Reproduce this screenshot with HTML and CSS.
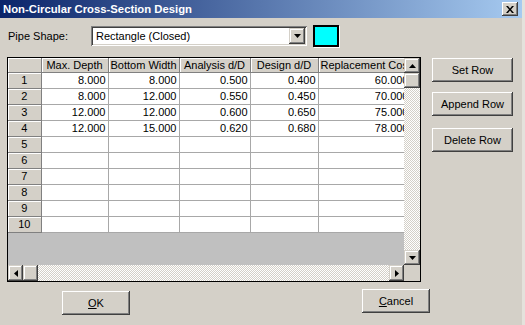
FILE: index.html
```html
<!DOCTYPE html>
<html lang="en">
<head>
    <meta charset="UTF-8">
    <title>Non-Circular Cross-Section Design</title>
    <link rel="stylesheet" href="styles.css">
</head>
<body>
    <div class="window">
        <div class="titleBar">
            <span class="titleText">Non-Circular Cross-Section Design</span>
            <span class="closeBtn">
                <svg width="8" height="7" viewBox="0 0 8 7"><path d="M0 0h2l2 2.5L6 0h2L5 3.5 8 7H6L4 4.5 2 7H0l3-3.5z" fill="#000"/></svg>
            </span>
        </div>

        <div class="shapeRow">
            <label class="shapeLabel">Pipe Shape:</label>
            <div class="combo">
                <span class="comboText">Rectangle (Closed)</span>
                <span class="comboBtn">
                    <svg width="7" height="4" viewBox="0 0 7 4"><path d="M0 0h7L3.5 4z" fill="#000"/></svg>
                </span>
            </div>
            <div class="swatch"></div>
        </div>

        <div class="mainRow">
            <div class="gridFrame">
                <div class="gridView">
                    <table class="dataGrid">
                        <colgroup>
                            <col style="width:33px">
                            <col style="width:67px">
                            <col style="width:71px">
                            <col style="width:71px">
                            <col style="width:68px">
                            <col style="width:93px">
                        </colgroup>
                        <thead>
                            <tr>
                                <th></th>
                                <th>Max. Depth</th>
                                <th>Bottom Width</th>
                                <th>Analysis d/D</th>
                                <th>Design d/D</th>
                                <th>Replacement Cost</th>
                            </tr>
                        </thead>
                        <tbody>
                            <tr><th>1</th><td>8.000</td><td>8.000</td><td>0.500</td><td>0.400</td><td>60.000</td></tr>
                            <tr><th>2</th><td>8.000</td><td>12.000</td><td>0.550</td><td>0.450</td><td>70.000</td></tr>
                            <tr><th>3</th><td>12.000</td><td>12.000</td><td>0.600</td><td>0.650</td><td>75.000</td></tr>
                            <tr><th>4</th><td>12.000</td><td>15.000</td><td>0.620</td><td>0.680</td><td>78.000</td></tr>
                            <tr><th>5</th><td></td><td></td><td></td><td></td><td></td></tr>
                            <tr><th>6</th><td></td><td></td><td></td><td></td><td></td></tr>
                            <tr><th>7</th><td></td><td></td><td></td><td></td><td></td></tr>
                            <tr><th>8</th><td></td><td></td><td></td><td></td><td></td></tr>
                            <tr><th>9</th><td></td><td></td><td></td><td></td><td></td></tr>
                            <tr><th>10</th><td></td><td></td><td></td><td></td><td></td></tr>
                        </tbody>
                    </table>
                </div>
                <div class="vScroll">
                    <span class="scrollBtn">
                        <svg width="7" height="4" viewBox="0 0 7 4"><path d="M3.5 0L7 4H0z" fill="#000"/></svg>
                    </span>
                    <span class="scrollBtn thumb"></span>
                    <span class="track"></span>
                    <span class="scrollBtn">
                        <svg width="7" height="4" viewBox="0 0 7 4"><path d="M0 0h7L3.5 4z" fill="#000"/></svg>
                    </span>
                </div>
                <div class="hScroll">
                    <span class="scrollBtn">
                        <svg width="4" height="7" viewBox="0 0 4 7"><path d="M0 3.5L4 0v7z" fill="#000"/></svg>
                    </span>
                    <span class="scrollBtn thumb"></span>
                    <span class="track"></span>
                    <span class="scrollBtn">
                        <svg width="4" height="7" viewBox="0 0 4 7"><path d="M4 3.5L0 0v7z" fill="#000"/></svg>
                    </span>
                </div>
                <div class="corner"></div>
            </div>

            <div class="sideButtons">
                <button class="winBtn sideBtn">Set Row</button>
                <button class="winBtn sideBtn">Append Row</button>
                <button class="winBtn sideBtn deleteBtn">Delete Row</button>
            </div>
        </div>

        <div class="bottomRow">
            <button class="winBtn dialogBtn okBtn"><u>O</u>K</button>
            <button class="winBtn dialogBtn cancelBtn"><u>C</u>ancel</button>
        </div>
    </div>
</body>
</html>
```

FILE: styles.css
```css
html, body {
    margin: 0;
    padding: 0;
    background-color: #d4d0c8;
}

body {
    font-family: 'Liberation Sans', Arial, sans-serif;
    font-size: 11px;
    color: #000000;
}

.window {
    width: 525px;
    height: 325px;
    overflow: hidden;
    border-right: 3px solid #e4e2dc;
    box-sizing: border-box;
}

.titleBar {
    height: 18px;
    display: flex;
    align-items: center;
    justify-content: space-between;
    padding: 0 4px 0 3px;
    background: linear-gradient(to right, #0a246a, #a6caf0);
}

.titleText {
    color: #ffffff;
    font-weight: bold;
    font-size: 11.3px;
}

.closeBtn {
    width: 16px;
    height: 14px;
    display: flex;
    align-items: center;
    justify-content: center;
    background-color: #d4d0c8;
    box-shadow: inset -1px -1px #404040, inset 1px 1px #ffffff, inset -2px -2px #808080;
}

.shapeRow {
    display: flex;
    align-items: center;
    height: 22px;
    margin-top: 7px;
    padding-left: 8px;
}

.shapeLabel {
    width: 83px;
}

.combo {
    width: 216px;
    height: 20px;
    box-sizing: border-box;
    display: flex;
    align-items: center;
    justify-content: space-between;
    background-color: #ffffff;
    box-shadow: inset 1px 1px #808080, inset -1px -1px #ffffff, inset 2px 2px #404040, inset -2px -2px #d4d0c8;
    padding: 2px;
}

.comboText {
    padding-left: 3px;
}

.comboBtn {
    width: 16px;
    height: 16px;
    display: flex;
    align-items: center;
    justify-content: center;
    background-color: #d4d0c8;
    box-shadow: inset -1px -1px #404040, inset 1px 1px #d4d0c8, inset -2px -2px #808080, inset 2px 2px #ffffff;
}

.swatch {
    width: 22px;
    height: 18px;
    margin-left: 6px;
    background-color: #00ffff;
    border: 2px solid #000000;
    box-shadow: 1px 1px 0 #ffffff;
}

.mainRow {
    display: flex;
    align-items: flex-start;
    margin-top: 10px;
    padding-left: 7px;
}

.gridFrame {
    width: 414px;
    height: 225px;
    box-sizing: border-box;
    border: 1px solid #000000;
    display: grid;
    grid-template-columns: 396px 16px;
    grid-template-rows: 207px 16px;
}

.gridView {
    overflow: hidden;
    background-color: #c0c0c0;
}

.dataGrid {
    border-collapse: collapse;
    table-layout: fixed;
    width: 403px;
}

.dataGrid th,
.dataGrid td {
    padding: 0 2px;
    white-space: nowrap;
    overflow: hidden;
    box-sizing: border-box;
}

.dataGrid thead th {
    height: 14px;
    font-weight: normal;
    text-align: center;
    background-color: #d4d0c8;
    border-right: 1px solid #808080;
    border-bottom: 1px solid #808080;
    box-shadow: inset 1px 1px #ffffff;
}

.dataGrid tbody th {
    height: 16px;
    font-weight: normal;
    text-align: center;
    background-color: #d4d0c8;
    border-right: 1px solid #808080;
    border-bottom: 1px solid #808080;
    box-shadow: inset 1px 1px #ffffff;
}

.dataGrid td {
    height: 16px;
    text-align: right;
    background-color: #ffffff;
    border-right: 1px solid #a8a8a8;
    border-bottom: 1px solid #a8a8a8;
}

.vScroll,
.hScroll {
    display: flex;
    background: repeating-conic-gradient(#ffffff 0 25%, #d4d0c8 0 50%) 0 0 / 2px 2px;
}

.vScroll {
    flex-direction: column;
}

.track {
    flex: 1;
}

.scrollBtn {
    width: 16px;
    height: 16px;
    flex: none;
    display: flex;
    align-items: center;
    justify-content: center;
    background-color: #d4d0c8;
    box-shadow: inset -1px -1px #404040, inset 1px 1px #d4d0c8, inset -2px -2px #808080, inset 2px 2px #ffffff;
}

.vScroll .scrollBtn {
    width: 16px;
    height: 15px;
}

.hScroll .scrollBtn {
    width: 15px;
}

.corner {
    background-color: #d4d0c8;
}

.sideButtons {
    display: flex;
    flex-direction: column;
    margin-left: 11px;
    margin-top: 1px;
}

.winBtn {
    font-family: 'Liberation Sans', Arial, sans-serif;
    font-size: 11px;
    color: #000000;
    background-color: #d4d0c8;
    border: none;
    padding: 0;
    box-shadow: inset -1px -1px #404040, inset 1px 1px #ffffff, inset -2px -2px #808080, inset 2px 2px #d4d0c8;
}

.winBtn u {
    text-decoration: underline;
}

.sideBtn {
    width: 81px;
    height: 24px;
    margin-bottom: 10px;
}

.deleteBtn {
    margin-top: 2px;
}

.bottomRow {
    display: flex;
    align-items: flex-start;
    padding-left: 62px;
    margin-top: 7px;
}

.dialogBtn {
    width: 68px;
    height: 24px;
}

.okBtn {
    margin-top: 2px;
}

.cancelBtn {
    margin-left: 232px;
}
```
